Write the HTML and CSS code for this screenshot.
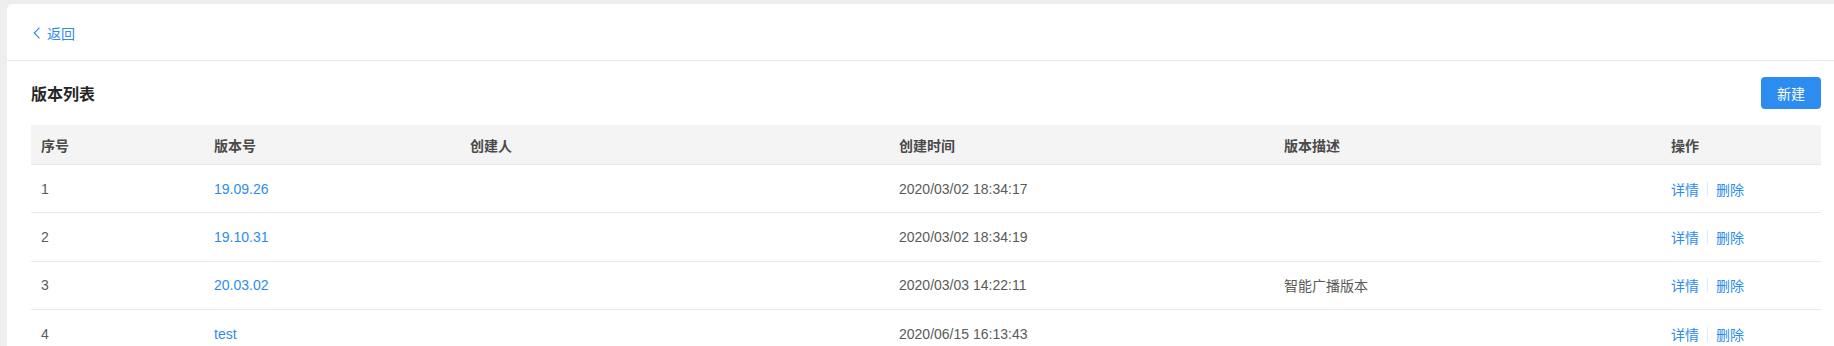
FILE: index.html
```html
<!DOCTYPE html>
<html lang="zh-CN">
<head>
<meta charset="utf-8">
<title>版本列表</title>
<link rel="stylesheet" href="styles.css">
</head>
<body>
<div class="card">
  <div class="card-head">
    <a class="back" href="#">
      <svg class="chev" width="8" height="12" viewBox="0 0 8 12"><path d="M6.5 0.6 L1.2 6 L6.5 11.4" fill="none" stroke="currentColor" stroke-width="1.1"/></svg>
      <span>返回</span>
    </a>
  </div>
  <div class="card-body">
    <div class="title-row">
      <h2 class="title">版本列表</h2>
      <button class="btn-primary">新建</button>
    </div>
    <div class="table">
      <div class="tr th">
        <div class="cell">序号</div>
        <div class="cell">版本号</div>
        <div class="cell">创建人</div>
        <div class="cell">创建时间</div>
        <div class="cell">版本描述</div>
        <div class="cell">操作</div>
      </div>
      <div class="tr">
        <div class="cell">1</div>
        <div class="cell"><a class="link" href="#">19.09.26</a></div>
        <div class="cell"></div>
        <div class="cell">2020/03/02 18:34:17</div>
        <div class="cell"></div>
        <div class="cell"><a class="link" href="#">详情</a><span class="sep"></span><a class="link" href="#">删除</a></div>
      </div>
      <div class="tr">
        <div class="cell">2</div>
        <div class="cell"><a class="link" href="#">19.10.31</a></div>
        <div class="cell"></div>
        <div class="cell">2020/03/02 18:34:19</div>
        <div class="cell"></div>
        <div class="cell"><a class="link" href="#">详情</a><span class="sep"></span><a class="link" href="#">删除</a></div>
      </div>
      <div class="tr">
        <div class="cell">3</div>
        <div class="cell"><a class="link" href="#">20.03.02</a></div>
        <div class="cell"></div>
        <div class="cell">2020/03/03 14:22:11</div>
        <div class="cell">智能广播版本</div>
        <div class="cell"><a class="link" href="#">详情</a><span class="sep"></span><a class="link" href="#">删除</a></div>
      </div>
      <div class="tr">
        <div class="cell">4</div>
        <div class="cell"><a class="link" href="#">test</a></div>
        <div class="cell"></div>
        <div class="cell">2020/06/15 16:13:43</div>
        <div class="cell"></div>
        <div class="cell"><a class="link" href="#">详情</a><span class="sep"></span><a class="link" href="#">删除</a></div>
      </div>
    </div>
  </div>
</div>
</body>
</html>
```

FILE: styles.css
```css
html, body {
  margin: 0;
  padding: 0;
}
body {
  background: #eeeeee;
  padding: 4px 0 0 7px;
  font-family: "Liberation Sans", "Noto Sans CJK SC", sans-serif;
  font-size: 14px;
  color: #5a5a5a;
  overflow: hidden;
}
.card {
  background: #ffffff;
  border-radius: 6px 0 0 0;
  min-height: 400px;
}
.card-head {
  height: 57px;
  border-bottom: 1px solid #e8e8e8;
  display: flex;
  align-items: center;
  padding-left: 26px;
  box-sizing: border-box;
}
.back {
  display: flex;
  align-items: center;
  color: #2d8cf0;
  text-decoration: none;
  font-size: 14px;
  gap: 6px;
  margin-top: 1px;
}
.chev {
  display: block;
}
.card-body {
  padding: 16px 13px 0 24px;
}
.title-row {
  display: flex;
  align-items: center;
  justify-content: space-between;
  height: 32px;
  margin-bottom: 16px;
}
.title {
  margin: 0;
  font-size: 16px;
  font-weight: bold;
  color: #262626;
}
.btn-primary {
  width: 60px;
  height: 32px;
  border: none;
  border-radius: 4px;
  background: #2d8cf0;
  color: #ffffff;
  font-family: "Liberation Sans", "Noto Sans CJK SC", sans-serif;
  font-size: 14px;
  padding: 0;
}
.table {
  display: flex;
  flex-direction: column;
}
.tr {
  display: grid;
  grid-template-columns: 173px 256px 429px 385px 387px 1fr;
  height: 48.33px;
  border-bottom: 1px solid #e8e8e8;
  box-sizing: border-box;
  align-items: center;
}
.th {
  height: 40px;
  background: #f4f4f4;
  font-weight: bold;
  color: #4a4a4a;
}
.cell {
  padding-left: 10px;
  display: flex;
  align-items: center;
  white-space: nowrap;
}
.link {
  color: #2d8cf0;
  text-decoration: none;
}
.sep {
  display: inline-block;
  width: 0;
  height: 14px;
  border-left: 1px solid #e8e8e8;
  margin: 0 8px;
}
```
